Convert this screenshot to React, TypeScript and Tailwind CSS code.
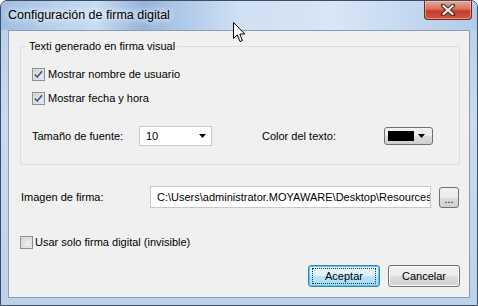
import React from 'react'

const ui = { fontFamily: '"Liberation Sans", Arial, sans-serif' }

function CheckBox({ checked }: { checked?: boolean }) {
    return (
        <svg width="13" height="13" viewBox="0 0 13 13" className="shrink-0">
            <defs>
                <linearGradient id="cbg" x1="0" y1="0" x2="1" y2="1">
                    <stop offset="0" stopColor="#d8d8d8" />
                    <stop offset="1" stopColor="#f6f6f6" />
                </linearGradient>
            </defs>
            <rect x="0.5" y="0.5" width="12" height="12" fill="#f4f4f4" stroke="#8f8f8f" />
            <rect x="2" y="2" width="9" height="9" fill="url(#cbg)" stroke="#b8b8b8" strokeWidth="0.6" />
            {checked && (
                <path d="M3 6.5 L5.3 9 L10 3.2" fill="none" stroke="#3d5f9c" strokeWidth="1.8" strokeLinejoin="round" />
            )}
        </svg>
    )
}

function Cursor() {
    return (
        <svg width="13" height="21" viewBox="0 0 13 21" className="absolute left-[232px] top-[21px]">
            <path d="M0.5 0.5 L0.5 16.5 L4.3 12.9 L7 19.5 L9.4 18.5 L6.8 12 L11.8 12 Z" fill="#fff" stroke="#000" strokeWidth="1" strokeLinejoin="round" />
        </svg>
    )
}

export default function App() {
    return (
        <div className="relative w-[478px] h-[306px] overflow-hidden rounded-t-[7px] border border-[#3e4d60] bg-[linear-gradient(to_bottom,#b6cfea,#c8dbf0_40%,#bcd2eb)]" style={ui}>
            {/* title bar */}
            <div className="relative flex h-[29px] bg-[linear-gradient(to_right,#9fbde2_0%,#b9d1ec_12%,#c9dcf1_20%,#94b4dc_30%,#a9c5e6_36%,#cfe0f3_50%,#d8e6f5_70%,#c5d9f0_85%,#b2cbe9_100%)]">
                <span className="pl-[7px] pt-[6px] text-[12.5px] leading-[16px] text-black [text-shadow:0_0_6px_#fff,0_0_10px_#fff]">
                    Configuración de firma digital
                </span>
                <div className="ml-auto mr-[5px] flex h-[19px] w-[48px] items-center justify-center rounded-b-[4px] border border-t-0 border-[#6b2b22] bg-[linear-gradient(to_bottom,#e9a898,#d7705c_45%,#c23c26_55%,#d0553c)] shadow-[inset_0_0_0_1px_rgba(255,210,200,0.5)]">
                    <svg width="14" height="12" viewBox="0 0 14 12">
                        <path d="M2 1.5 L12 10.5 M12 1.5 L2 10.5" stroke="#4a1c14" strokeWidth="4" strokeLinecap="square" />
                        <path d="M2.5 2 L11.5 10 M11.5 2 L2.5 10" stroke="#fff" strokeWidth="2.2" strokeLinecap="square" />
                    </svg>
                </div>
            </div>

            {/* client area */}
            <div className="mx-[7px] h-[268px] border border-[#8c9db3] bg-[#f0f0f0] pl-[11px] text-[11px] leading-[13px] text-black">
                <fieldset className="mt-[8px] w-[440px] rounded-[3px] border border-[#d5dfe5] pb-[18px] pl-[11px]">
                    <legend className="ml-[-5px] px-[2px] leading-[14px]">Texti generado en firma visual</legend>
                    <div className="mt-[15px] flex h-[13px] items-center gap-[3px]">
                        <CheckBox checked />
                        <span>Mostrar nombre de usuario</span>
                    </div>
                    <div className="mt-[11px] flex h-[13px] items-center gap-[3px]">
                        <CheckBox checked />
                        <span>Mostrar fecha y hora</span>
                    </div>
                    <div className="mt-[21px] flex h-[20px] items-center">
                        <span className="w-[107px]">Tamaño de fuente:</span>
                        <div className="flex h-[20px] w-[73px] items-center justify-between border border-[#c9c9c9] bg-white pl-[6px] pr-[5px]">
                            <span>10</span>
                            <svg width="7" height="4" viewBox="0 0 7 4"><path d="M0 0 H7 L3.5 4 Z" fill="#000" /></svg>
                        </div>
                        <span className="ml-[50px] w-[122px]">Color del texto:</span>
                        <div className="flex h-[18px] w-[49px] items-center gap-[4px] rounded-[3px] border border-[#707070] bg-[linear-gradient(to_bottom,#f2f2f2,#ebebeb_50%,#dddddd_50%,#cfcfcf)] pl-[3px]">
                            <div className="h-[10px] w-[26px] bg-black" />
                            <svg width="7" height="4" viewBox="0 0 7 4"><path d="M0 0 H7 L3.5 4 Z" fill="#000" /></svg>
                        </div>
                    </div>
                </fieldset>

                <div className="mt-[21px] flex h-[22px] w-[440px] items-center">
                    <span className="w-[130px] pl-[1px]">Imagen de firma:</span>
                    <div className="flex h-[22px] w-[281px] items-center overflow-hidden whitespace-nowrap border border-[#c9c9c9] bg-white pl-[6px]">
                        C:\Users\administrator.MOYAWARE\Desktop\Resources
                    </div>
                    <div className="ml-[8px] mt-[1px] flex h-[21px] w-[20px] items-end justify-center rounded-[3px] border border-[#707070] bg-[linear-gradient(to_bottom,#f2f2f2,#ebebeb_50%,#dddddd_50%,#cfcfcf)] pb-[4px] leading-[8px]">
                        ...
                    </div>
                </div>

                <div className="mt-[28px] flex h-[13px] items-center gap-[2px]">
                    <CheckBox />
                    <span>Usar solo firma digital (invisible)</span>
                </div>

                <div className="mt-[16px] flex w-[440px] justify-end gap-[8px]">
                    <div className="flex h-[22px] w-[72px] items-center justify-center rounded-[3px] border border-[#3c7fb1] bg-[linear-gradient(to_bottom,#eaf6fd,#d9f0fc_50%,#bee6fd_50%,#a7d9f5)] shadow-[inset_0_0_0_1px_#48d0f5]">
                        <span className="flex h-[16px] w-[64px] items-center justify-center border border-dotted border-[#333]">Aceptar</span>
                    </div>
                    <div className="flex h-[22px] w-[72px] items-center justify-center rounded-[3px] border border-[#707070] bg-[linear-gradient(to_bottom,#f2f2f2,#ebebeb_50%,#dddddd_50%,#cfcfcf)] shadow-[inset_0_0_0_1px_#fcfcfc]">
                        Cancelar
                    </div>
                </div>
            </div>

            <Cursor />
        </div>
    )
}
